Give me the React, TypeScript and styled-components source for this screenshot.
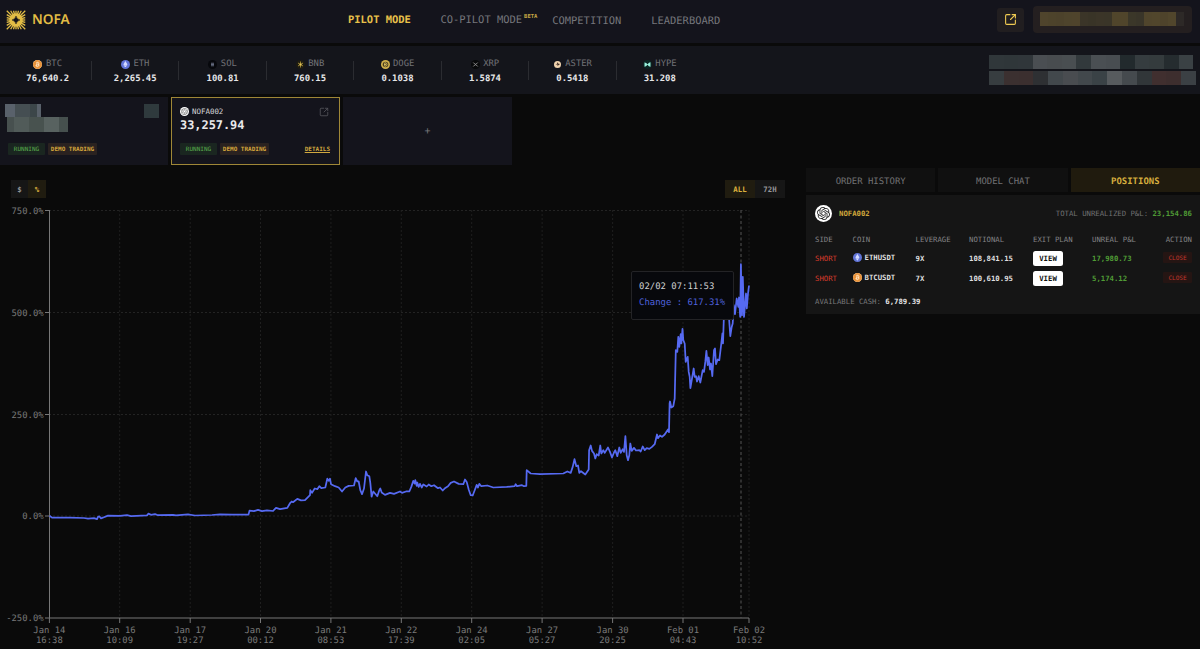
import React from "react";
import styled, { createGlobalStyle } from "styled-components";
import { SquareArrowOutUpRight } from "lucide-react";
import { SiBitcoin, SiEthereum, SiOpenai } from "react-icons/si";

const GlobalStyle = createGlobalStyle`
  * {
    box-sizing: border-box;
  }
  body {
    margin: 0;
    background: #0a0a0a;
    color: #eaeaec;
    font-family: "DejaVu Sans Mono", "Liberation Mono", monospace;
    text-rendering: geometricPrecision;
    overflow: hidden;
  }
`;

type CoinName = "BTC" | "ETH" | "SOL" | "BNB" | "DOGE" | "XRP" | "ASTER" | "HYPE";

const tickers: { name: CoinName; price: string }[] = [
  { name: "BTC", price: "76,640.2" },
  { name: "ETH", price: "2,265.45" },
  { name: "SOL", price: "100.81" },
  { name: "BNB", price: "760.15" },
  { name: "DOGE", price: "0.1038" },
  { name: "XRP", price: "1.5874" },
  { name: "ASTER", price: "0.5418" },
  { name: "HYPE", price: "31.208" },
];

const positions: { coin: CoinName; symbol: string; leverage: string; notional: string; pnl: string }[] = [
  { coin: "ETH", symbol: "ETHUSDT", leverage: "9X", notional: "108,841.15", pnl: "17,980.73" },
  { coin: "BTC", symbol: "BTCUSDT", leverage: "7X", notional: "100,610.95", pnl: "5,174.12" },
];

const yTicks = [
  { y: 8.5, label: "750.0%" },
  { y: 110.5, label: "500.0%" },
  { y: 212.5, label: "250.0%" },
  { y: 314, label: "0.0%" },
  { y: 416, label: "-250.0%" },
];

const xTicks = [
  { x: 49.4, day: "Jan 14", time: "16:38" },
  { x: 119.7, day: "Jan 16", time: "10:09" },
  { x: 190.2, day: "Jan 17", time: "19:27" },
  { x: 260.5, day: "Jan 20", time: "00:12" },
  { x: 330.9, day: "Jan 21", time: "08:53" },
  { x: 401.3, day: "Jan 22", time: "17:39" },
  { x: 471.7, day: "Jan 24", time: "02:05" },
  { x: 542.1, day: "Jan 27", time: "05:27" },
  { x: 612.6, day: "Jan 30", time: "20:25" },
  { x: 683, day: "Feb 01", time: "04:43" },
  { x: 749, day: "Feb 02", time: "10:52" },
];

// x,y pairs of the account curve
const series = `
49.5,515.5 52,517.4 70,517.4 84,517.8 88,518.4 94,518 97,519 98,516.6 99.5,516.2 101,518.2 104,517 108,515.4
120,515.7 127,515 131,516 147,515.2 148.5,513.4 151,514.6 155,513.9 158,515 173,514.6 176,515.2 188,514.2 195,515.3
212,514.8 220,514.2 232,514.4 248.5,514.4 249.5,510.4 254,510.9 258,509.6 262,511 267,510.2 273,510.8 276,507.6 280,509
287.3,507.7 290,503 291.7,501.3 293,502 297.3,498.7 301,500.2 305,500 310,495 310.3,490 312,492.7 314.7,488.3
317.3,489 319.3,486 321.3,488 325.3,487.3 327.3,478.5 328.7,480.7 330,478.5 331,484 335,486 338.7,487.3 342,491.3
345.3,487.3 348.7,485.7 354,485.3 355.7,478 357.3,481.3 358.7,481.3 360.3,490 362,494 364,488.3 366,471.3 367.3,475
369.3,476 370.3,482.7 371.6,496.5 373.3,491.3 377.3,496 379.3,490 380.3,488.3 381.7,492.3 385,494.7 390,492.7 394,493.7
400,491.3 402,492.7 406,491.3 409.3,491.3 411.3,486.7 413.3,480.7 414.7,483.3 415.3,480 416.7,485.7 417.3,482.3
418.7,486.7 420,483.7 421.7,487.3 423.3,484.3 426.7,486.3 428.7,484.3 431.3,486 434,485 438,488 440,487.3 442.7,490.3
445.3,487.7 448,486 450.7,482.7 454,481.3 458.7,483.7 463.3,484 465,479.3 466.7,481.7 468.7,489.3 470.7,495 472.7,495.3
474.7,490 476.7,484.7 478,487.3 479.3,483.7 481.3,486 487.3,485.3 493.3,487.3 506.7,486.7 514.7,486 515.7,484
517,486 522,485 524,486 526.3,485.7 526.7,470 530.7,473.3 540,474 563.3,473.3 567.3,471.3 570.7,472.7 572.7,466.7
574.5,459 576.3,466 578,465.3 579.3,472.7 581,471 585.3,474.3 588.7,469.3 589.1,450 590.7,445.3 592,450.7 594,453.3
595.3,458.3 596.7,454 598.7,455.3 600.3,445.3 601.3,453.3 603.3,450 604.7,452.7 608,447.3 610,451.7 612,457.3
614,452.3 615.3,450 617.3,456 619.3,447.3 620.7,452.7 622.7,449 624,451.7 625.4,436 626.7,455 628,460 629.3,455
630.3,443.3 631.7,450.7 634,447.7 636,450.3 639.3,450 640.7,451.3 642.7,446.3 644.7,450 646.7,448 649.3,448.7
652,446.7 654.7,444 657,434.3 658,438 660,435.3 662,436.7 664.7,434.3 668,429.3 669,432 669.6,403.3 670,401.3
671.3,407.3 673.3,406 674.7,398.3 675.8,350 677.3,351.7 678.3,336.7 679.3,346.7 680.7,334 681.3,343.3 682.5,328.7
683.3,340 684.7,343.3 685.7,361.7 687.7,356.7 688.7,371.7 689.7,376.7 690.4,388 692,378.3 693.7,368.3 694.7,376.7
696,376 697,381.3 698.7,376 700.3,382.3 702.7,370 704,371.7 705.3,361.7 706.4,350.7 707.7,365 708.7,357.3 710,369.3
711,363.3 712.3,376 714,350 715,348.3 716,364 717.7,359.3 719.3,360 721.3,343.3 722.4,333.3 723,343.3 724,313 725.3,303
728.7,313 730.3,336 731.7,326.7 732.7,323.3 733.8,305 735,314 736.7,298.3 738.3,306.7 739,297.3 740.2,316.7 740.9,264
742,315 742.8,276.7 744,316.7 746,293.3 746.8,308.3 748,293.3 749,285.3`;

const walletPixels = ["#4f442c", "#4d432b", "#4c422b", "#4e442c", "#4f442c", "#3b3528", "#393427", "#3b3528", "#3a3528", "#50452b", "#50452b", "#3b3729", "#393529", "#50452c", "#51462c", "#4e432b", "#51462c", "#2d2927"];
const infoTop = ["#30373a", "#2f3639", "#30363a", "#4a4e52", "#484c4f", "#494e51", "#32393c", "#4a4f53", "#484d51", "#222a2d", "#353c3f", "#343b3d", "#252c2f", "#3a4144"];
const infoBottom = ["#373d40", "#3b3030", "#3b2f2f", "#2e3033", "#42484c", "#494c50", "#42484c", "#3a4246", "#575b5e", "#454a4e", "#313639", "#402f2f", "#3d2e2e", "#3b4044"];

function CoinIcon({ name, size = 9 }: { name: CoinName; size?: number }) {
  switch (name) {
    case "BTC":
      return <CoinDisc $size={size} $bg="#ffe3c0"><SiBitcoin size={size} color="#e8923a" /></CoinDisc>;
    case "ETH":
      return <CoinDisc $size={size} $bg="#6275d8"><SiEthereum size={size * 0.75} color="#d4dbff" /></CoinDisc>;
    case "BNB":
      return (
        <svg width={size} height={size} viewBox="0 0 18 18">
          <circle cx="9" cy="9" r="9" fill="#1d1b12" />
          <path d="M9 3v12M4 6l10 6M4 12l10-6" stroke="#b3983a" strokeWidth="1.7" />
          <circle cx="9" cy="9" r="2.2" fill="#e6c95a" />
        </svg>
      );
    case "DOGE":
      return (
        <svg width={size} height={size} viewBox="0 0 18 18">
          <circle cx="9" cy="9" r="9" fill="#d0b04c" />
          <circle cx="9" cy="9" r="5.6" fill="#4a3e1c" />
          <path d="M7.5 5.5V12.5H9Q12 12 12 9T9 5.5zM6 9h4" fill="none" stroke="#e3c867" strokeWidth="1.6" />
        </svg>
      );
    case "SOL":
      return (
        <svg width={size} height={size} viewBox="0 0 18 18">
          <circle cx="9" cy="9" r="9" fill="#07080c" />
          <path d="M6 6.5h6M6 9h6M6 11.5h6" stroke="#7a829a" strokeWidth="1.6" />
        </svg>
      );
    case "XRP":
      return (
        <svg width={size} height={size} viewBox="0 0 18 18">
          <circle cx="9" cy="9" r="9" fill="#08090a" />
          <path d="M4.5 5l3 3q1.5 1.2 3 0l3-3M4.5 13l3-3q1.5-1.2 3 0l3 3" fill="none" stroke="#b8b8b8" strokeWidth="1.4" />
        </svg>
      );
    case "ASTER":
      return (
        <svg width={size} height={size} viewBox="0 0 18 18">
          <circle cx="9" cy="9" r="7" fill="#f0d3ae" />
          <path d="M9 4q0 4-4 5h4v3l5-4-4-1z" fill="#3c2a20" />
        </svg>
      );
    default:
      return (
        <svg width={size} height={size} viewBox="0 0 18 18">
          <circle cx="9" cy="9" r="9" fill="#0a2523" />
          <path d="M3 5q3-.5 6 3.5 3-4 6-4v9q-3 .5-6-4-3 4-6 4z" fill="#98f0dc" />
        </svg>
      );
  }
}

function Logo() {
  const rays = Array.from({ length: 24 }, (_, i) => i * 15);
  return (
    <svg width="20" height="20" viewBox="-20 -20 40 40">
      {rays.map((a) => {
        const r = (a * Math.PI) / 180;
        const len = 18.5 / Math.max(Math.abs(Math.cos(r)), Math.abs(Math.sin(r)));
        return <line key={a} x1={0} y1={0} x2={Math.cos(r) * len} y2={Math.sin(r) * len} stroke="#e2bd45" strokeWidth={2.6} />;
      })}
      <circle r="13.5" fill="#e2bd45" />
      <path d="M0-8Q1.5-1.5 8 0 1.5 1.5 0 8-1.5 1.5-8 0-1.5-1.5 0-8z" fill="#14141b" stroke="#14141b" />
    </svg>
  );
}

function Chart() {
  return (
    <ChartSvg width="800" height="448" viewBox="0 0 800 448">
      {yTicks.slice(0, 4).map((t) => (
        <line key={t.label} x1="49" x2="749" y1={t.y} y2={t.y} stroke="#232323" strokeDasharray="2 2" />
      ))}
      {xTicks.slice(1).map((t) => (
        <line key={t.day + t.time} x1={t.x} x2={t.x} y1="8" y2="416" stroke="#1f1f1f" strokeDasharray="2 2" />
      ))}
      <path d="M49.5 8V416H749" fill="none" stroke="#777" />
      {yTicks.map((t) => (
        <g key={t.label}>
          <line x1="45" x2="49.5" y1={t.y} y2={t.y} stroke="#777" />
          <text x="43.6" y={t.y + 3.2} textAnchor="end">{t.label}</text>
        </g>
      ))}
      {xTicks.map((t) => (
        <g key={t.day + t.time}>
          <line x1={t.x} x2={t.x} y1="416" y2="421" stroke="#777" />
          <text x={t.x} y="430.8" textAnchor="middle">{t.day}</text>
          <text x={t.x} y="441.2" textAnchor="middle">{t.time}</text>
        </g>
      ))}
      <line x1="741" x2="741" y1="8" y2="416" stroke="#555" strokeDasharray="3 2.5" />
      <polyline points={series} transform="translate(0 -201.8)" fill="none" stroke="#566af2" strokeWidth="1.75" strokeLinejoin="round" />
    </ChartSvg>
  );
}

const App: React.FC = () => {
  return (
    <Page>
      <GlobalStyle />
      <Header>
        <Brand>
          <Logo />
          <BrandName>NOFA</BrandName>
        </Brand>
        <Nav>
          <NavItem $active $width={92.4}>PILOT MODE</NavItem>
          <NavItem $width={111.8}>CO-PILOT MODE<Beta>BETA</Beta></NavItem>
          <NavItem $width={99} $drop>COMPETITION</NavItem>
          <NavItem $width={70} $drop>LEADERBOARD</NavItem>
        </Nav>
        <HeaderRight>
          <IconButton>
            <SquareArrowOutUpRight size={13} color="#f0cb52" />
          </IconButton>
          <Wallet>
            <Mosaic $width={144} $height={14}>
              {walletPixels.map((c, i) => <Pixel key={i} $color={c} />)}
            </Mosaic>
          </Wallet>
        </HeaderRight>
      </Header>

      <TickerBar>
        {tickers.map((t) => (
          <Ticker key={t.name}>
            <TickerName><CoinIcon name={t.name} />{t.name}</TickerName>
            <TickerPrice>{t.price}</TickerPrice>
          </Ticker>
        ))}
        <AccountInfo>
          <Mosaic $width={204} $height={14}>
            {infoTop.map((c, i) => <Pixel key={i} $color={c} />)}
          </Mosaic>
          <Mosaic $width={207} $height={14}>
            {infoBottom.map((c, i) => <Pixel key={i} $color={c} />)}
          </Mosaic>
        </AccountInfo>
      </TickerBar>

      <Main>
        <Left>
          <Cards>
            <Card>
              <HiddenTop>
                <HiddenText>
                  <Mosaic $width={36} $height={13}>
                    <Pixel $color="#59616b" $grow={10} />
                    <Pixel $color="#454e52" $grow={15} />
                    <Pixel $color="#3c4649" $grow={7} />
                    <Pixel $color="#59616a" $grow={4} />
                  </Mosaic>
                  <HiddenValue>
                    <Mosaic $width={61} $height={15}>
                      <Pixel $color="#47504f" $grow={7} />
                      <Pixel $color="#515b59" $grow={15} />
                      <Pixel $color="#48524f" $grow={15} />
                      <Pixel $color="#586260" $grow={15} />
                      <Pixel $color="#46504e" $grow={9} />
                    </Mosaic>
                  </HiddenValue>
                </HiddenText>
                <Mosaic $width={15} $height={14}><Pixel $color="#2f3a3d" /></Mosaic>
              </HiddenTop>
              <CardFooter $inset={8} $bottom={10}>
                <Tag $kind="running">RUNNING</Tag>
                <Tag $kind="demo">DEMO TRADING</Tag>
              </CardFooter>
            </Card>
            <Card $selected>
              <CardHead>
                <ModelName>
                  <Avatar $size={9}><SiOpenai size={7} color="#666" /></Avatar>
                  NOFA002
                </ModelName>
                <SquareArrowOutUpRight size={10} color="#55565c" />
              </CardHead>
              <Balance>33,257.94</Balance>
              <CardFooter $inset={8} $bottom={9}>
                <Tag $kind="running">RUNNING</Tag>
                <Tag $kind="demo">DEMO TRADING</Tag>
                <Details>DETAILS</Details>
              </CardFooter>
            </Card>
            <AddCard>+</AddCard>
          </Cards>

          <Toolbar>
            <Switcher>
              <SwitchItem $width={17}>$</SwitchItem>
              <SwitchItem $width={18} $active>%</SwitchItem>
            </Switcher>
            <Switcher>
              <SwitchItem $width={30} $active>ALL</SwitchItem>
              <SwitchItem $width={30}>72H</SwitchItem>
            </Switcher>
          </Toolbar>

          <ChartBox>
            <Chart />
            <Tooltip>
              <span>02/02 07:11:53</span>
              <TooltipValue>Change : 617.31%</TooltipValue>
            </Tooltip>
          </ChartBox>
        </Left>

        <Right>
          <Tabs>
            <Tab>ORDER HISTORY</Tab>
            <Tab>MODEL CHAT</Tab>
            <Tab $active>POSITIONS</Tab>
          </Tabs>
          <Panel>
            <PanelHead>
              <PanelModel>
                <Avatar $size={17}><SiOpenai size={13} color="#222" /></Avatar>
                NOFA002
              </PanelModel>
              <Muted>TOTAL UNREALIZED P&amp;L: <Profit>23,154.86</Profit></Muted>
            </PanelHead>
            <TableHead>
              <span>SIDE</span>
              <span>COIN</span>
              <span>LEVERAGE</span>
              <span>NOTIONAL</span>
              <span>EXIT PLAN</span>
              <span>UNREAL P&amp;L</span>
              <LastCell>ACTION</LastCell>
            </TableHead>
            {positions.map((p) => (
              <TableRow key={p.symbol}>
                <Short>SHORT</Short>
                <Symbol><CoinIcon name={p.coin} />{p.symbol}</Symbol>
                <span>{p.leverage}</span>
                <span>{p.notional}</span>
                <ViewButton>VIEW</ViewButton>
                <Profit>{p.pnl}</Profit>
                <LastCell><CloseButton>CLOSE</CloseButton></LastCell>
              </TableRow>
            ))}
            <Cash>AVAILABLE CASH: <b>6,789.39</b></Cash>
          </Panel>
        </Right>
      </Main>
    </Page>
  );
};

export default App;

const Page = styled.div`
  width: 1200px;
  height: 649px;
  display: flex;
  flex-direction: column;
  overflow: hidden;
  background: #0a0a0a;
`;

const Header = styled.header`
  display: flex;
  align-items: center;
  flex: none;
  height: 43px;
  margin-bottom: 3px;
  background: #14141c;
`;

const Brand = styled.div`
  display: flex;
  align-items: center;
  gap: 6px;
  width: 348px;
  padding: 0 0 4px 6px;
`;

const BrandName = styled.span`
  font-family: "Noto Sans", sans-serif;
  font-size: 13.6px;
  font-weight: 600;
  line-height: 18px;
  padding-bottom: 2px;
  color: #e2bd45;
`;

const Nav = styled.nav`
  display: flex;
  flex: 1;
  height: 100%;
  padding-top: 13px;
`;

const NavItem = styled.div<{ $active?: boolean; $width: number; $drop?: boolean }>`
  width: ${({ $width }) => $width}px;
  padding-top: ${({ $drop }) => ($drop ? 1 : 0)}px;
  font-size: 10.45px;
  line-height: 14px;
  white-space: nowrap;
  font-weight: ${({ $active }) => ($active ? 700 : 400)};
  color: ${({ $active }) => ($active ? "#e8c14a" : "#75767b")};
`;

const Beta = styled.span`
  position: relative;
  top: -5.5px;
  margin-left: 2px;
  font-size: 5.5px;
  line-height: 6px;
  font-weight: 700;
  color: #c8a844;
`;

const HeaderRight = styled.div`
  display: flex;
  align-items: center;
  gap: 9px;
  padding: 0 8px 4px 0;
`;

const IconButton = styled.div`
  display: flex;
  align-items: center;
  justify-content: center;
  width: 27px;
  height: 24px;
  border-radius: 3px;
  background: #211e20;
`;

const Wallet = styled.div`
  display: flex;
  align-items: center;
  width: 159px;
  height: 27px;
  padding: 0 0 1px 7px;
  border-radius: 4px;
  background: #241f20;
`;

const Mosaic = styled.div<{ $width: number; $height: number }>`
  display: flex;
  flex: none;
  width: ${({ $width }) => $width}px;
  height: ${({ $height }) => $height}px;
`;

const Pixel = styled.i<{ $color: string; $grow?: number }>`
  flex: ${({ $grow = 1 }) => $grow} 0 0;
  background: ${({ $color }) => $color};
`;

const TickerBar = styled.section`
  display: flex;
  align-items: center;
  flex: none;
  height: 48px;
  margin-bottom: 3px;
  padding-left: 4px;
  background: #14151b;
`;

const Ticker = styled.div`
  position: relative;
  width: 87.45px;
  padding-top: 3px;
  text-align: center;
  font-size: 8.9px;

  &:not(:nth-child(8))::after {
    content: "";
    position: absolute;
    right: -0.5px;
    top: 7px;
    width: 1px;
    height: 19px;
    background: #2b2c31;
  }
`;

const TickerName = styled.div`
  display: flex;
  align-items: center;
  justify-content: center;
  gap: 3.5px;
  line-height: 15px;
  color: #717277;
`;

const TickerPrice = styled.div`
  line-height: 15px;
  font-weight: 700;
  color: #e6e6e8;
`;

const CoinDisc = styled.span<{ $size: number; $bg: string }>`
  display: inline-flex;
  align-items: center;
  justify-content: center;
  flex: none;
  width: ${({ $size }) => $size}px;
  height: ${({ $size }) => $size}px;
  border-radius: 50%;
  background: ${({ $bg }) => $bg};
`;

const AccountInfo = styled.div`
  display: flex;
  flex-direction: column;
  gap: 2px;
  margin-left: auto;
  padding-right: 4px;
`;

const Main = styled.main`
  display: flex;
  flex: 1;
`;

const Left = styled.div`
  width: 806px;
`;

const Cards = styled.div`
  display: flex;
  gap: 3px;
  height: 68px;
`;

const Card = styled.div<{ $selected?: boolean }>`
  display: flex;
  flex-direction: column;
  width: ${({ $selected }) => ($selected ? 169 : 168)}px;
  border: ${({ $selected }) => ($selected ? "1px solid #9f8737" : "none")};
  background: #14141c;
`;

const HiddenTop = styled.div`
  display: flex;
  justify-content: space-between;
  padding: 7px 9px 0 5px;
`;

const HiddenText = styled.div`
  display: flex;
  flex-direction: column;
`;

const HiddenValue = styled.div`
  padding-left: 2px;
`;

const CardHead = styled.div`
  display: flex;
  justify-content: space-between;
  padding: 9px 10px 0 8px;
  height: 19px;
`;

const ModelName = styled.div`
  display: flex;
  align-items: center;
  gap: 3px;
  height: 9px;
  font-size: 7.45px;
  color: #d5d5d8;
`;

const Avatar = styled.span<{ $size: number }>`
  display: inline-flex;
  align-items: center;
  justify-content: center;
  flex: none;
  width: ${({ $size }) => $size}px;
  height: ${({ $size }) => $size}px;
  border-radius: 50%;
  background: #fff;
`;

const Balance = styled.div`
  padding-left: 8px;
  font-size: 11.9px;
  line-height: 16px;
  font-weight: 700;
`;

const CardFooter = styled.div<{ $inset: number; $bottom: number }>`
  display: flex;
  align-items: center;
  gap: 3px;
  margin-top: auto;
  padding: 0 9px ${({ $bottom }) => $bottom}px ${({ $inset }) => $inset}px;
`;

const Tag = styled.span<{ $kind: "running" | "demo" }>`
  display: flex;
  align-items: center;
  justify-content: center;
  width: ${({ $kind }) => ($kind === "running" ? 37 : 49)}px;
  height: 12px;
  border-radius: 1px;
  font-size: 6px;
  font-weight: ${({ $kind }) => ($kind === "running" ? 400 : 700)};
  color: ${({ $kind }) => ($kind === "running" ? "#5bae4e" : "#d6a73b")};
  background: ${({ $kind }) => ($kind === "running" ? "#1a2620" : "#2a2220")};
`;

const Details = styled.span`
  margin-left: auto;
  font-size: 6px;
  font-weight: 700;
  color: #d0a83f;
  text-decoration: underline;
  text-underline-offset: 1px;
`;

const AddCard = styled.div`
  display: flex;
  align-items: center;
  justify-content: center;
  width: 169px;
  font-size: 10px;
  color: #77787d;
  background: #14141c;
`;

const Toolbar = styled.div`
  display: flex;
  justify-content: space-between;
  width: 785px;
  padding: 15px 0 4px 11px;
`;

const Switcher = styled.div`
  display: flex;
  height: 18px;
  background: #161616;
`;

const SwitchItem = styled.span<{ $active?: boolean; $width: number }>`
  display: flex;
  align-items: center;
  justify-content: center;
  width: ${({ $width }) => $width}px;
  font-size: 7.4px;
  font-weight: 700;
  color: ${({ $active }) => ($active ? "#ddb23e" : "#97979a")};
  background: ${({ $active }) => ($active ? "#201c10" : "transparent")};
`;

const ChartBox = styled.div`
  position: relative;
  height: 447px;
`;

const ChartSvg = styled.svg`
  display: block;

  text {
    font-size: 8.9px;
    fill: #7a7a7a;
  }
`;

const Tooltip = styled.div`
  position: absolute;
  left: 631px;
  top: 68.5px;
  display: flex;
  flex-direction: column;
  width: 102.5px;
  height: 49.5px;
  padding: 7px 0 0 7px;
  border: 1px solid #232326;
  border-radius: 2px;
  background: #07080c;
  font-size: 8.95px;
  line-height: 16.5px;
  white-space: nowrap;
  color: #d0d0d2;
`;

const TooltipValue = styled.span`
  color: #4f62df;
`;

const Right = styled.aside`
  width: 394px;
  padding-top: 71px;
`;

const Tabs = styled.div`
  display: flex;
  gap: 3px;
  margin-bottom: 3px;
`;

const Tab = styled.div<{ $active?: boolean }>`
  flex: 1;
  height: 24px;
  padding-top: 1px;
  line-height: 26px;
  text-align: center;
  font-size: 8.95px;
  font-weight: ${({ $active }) => ($active ? 700 : 400)};
  color: ${({ $active }) => ($active ? "#d5ad3d" : "#727274")};
  background: ${({ $active }) => ($active ? "#201b0e" : "#101010")};
`;

const Panel = styled.div`
  height: 119px;
  padding: 9px 8px 0 9px;
  background: #151515;
  font-size: 7.3px;
`;

const PanelHead = styled.div`
  display: flex;
  align-items: center;
  justify-content: space-between;
  height: 18px;
`;

const PanelModel = styled.div`
  display: flex;
  align-items: center;
  gap: 7px;
  font-weight: 700;
  color: #cfa63b;
`;

const Muted = styled.span`
  color: #707072;
`;

const Profit = styled.span`
  font-weight: 700;
  color: #509c35;
`;

const TableHead = styled.div`
  display: grid;
  grid-template-columns: 37.5px 63px 53.5px 64px 59px 60px 1fr;
  align-items: center;
  height: 16px;
  margin: 9px 0 1px;
  white-space: nowrap;
  color: #838386;
`;

const TableRow = styled(TableHead)`
  height: 20px;
  margin: 0;
  font-weight: 700;
  color: #dededf;
`;

const LastCell = styled.span`
  display: flex;
  justify-content: flex-end;
`;

const Short = styled.span`
  font-weight: 400;
  color: #d63b2c;
`;

const Symbol = styled.span`
  display: flex;
  align-items: center;
  gap: 3px;
  padding-bottom: 1px;
`;

const ViewButton = styled.button`
  width: 30px;
  height: 15px;
  padding: 0;
  border: none;
  border-radius: 2.5px;
  font: inherit;
  color: #111;
  background: #fff;
`;

const CloseButton = styled.button`
  width: 29px;
  height: 11px;
  margin-bottom: 2px;
  padding: 0;
  border: none;
  border-radius: 1px;
  font: inherit;
  font-size: 6px;
  font-weight: 400;
  color: #c2352c;
  background: #251513;
`;

const Cash = styled.div`
  margin-top: 9px;
  color: #78787a;

  b {
    color: #e4e4e5;
  }
`;
